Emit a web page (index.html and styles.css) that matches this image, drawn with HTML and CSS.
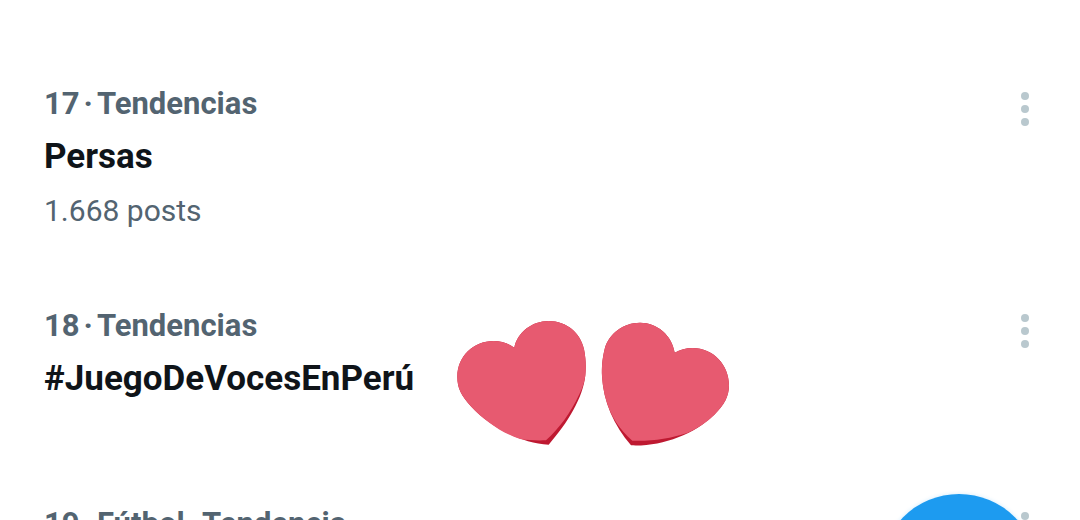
FILE: index.html
```html
<!DOCTYPE html>
<html lang="es">
<head>
  <meta charset="UTF-8">
  <title>Tendencias</title>
  <link rel="stylesheet" href="styles.css">
</head>
<body>
  <main class="trends">
    <article class="trend">
      <div class="trend-text">
        <p class="meta"><span>17</span> <span>·</span> <span>Tendencias</span></p>
        <h2 class="name">Persas</h2>
        <p class="posts">1.668 posts</p>
      </div>
      <button class="more" aria-label="Más opciones">
        <svg width="8" height="34" viewBox="0 0 8 34"><circle cx="4" cy="4" r="4"/><circle cx="4" cy="17" r="4"/><circle cx="4" cy="30" r="4"/></svg>
      </button>
    </article>

    <article class="trend">
      <div class="trend-text">
        <p class="meta"><span>18</span> <span>·</span> <span>Tendencias</span></p>
        <h2 class="name">#JuegoDeVocesEnPerú</h2>
      </div>
      <button class="more" aria-label="Más opciones">
        <svg width="8" height="34" viewBox="0 0 8 34"><circle cx="4" cy="4" r="4"/><circle cx="4" cy="17" r="4"/><circle cx="4" cy="30" r="4"/></svg>
      </button>
      <svg class="hearts" viewBox="0 0 930 465" aria-hidden="true">
        <path class="shade" d="M223 128C232 82 276 48 326 48C380 48 422 84 432 133C438 162 438 188 436 211C430 276 383 355 326 419C240 414 150 365 94 305C64 273 52 250 52 216C51 156 99 108 161 108C184 108 205 115 223 128Z"/>
        <path class="heart" d="M223 128C232 82 276 48 326 48C380 48 422 84 432 133C438 162 438 188 436 211C434 230 428 249 418 268C390 327 358 370 318 406C292 407 265 406 240 402C186 384 132 346 94 305C64 273 52 250 52 216C51 156 99 108 161 108C184 108 205 115 223 128Z"/>
        <path class="shade" d="M704 143C696 91 652 53 600 53C550 53 506 86 494 132C486 164 485 190 486 213C490 290 522 362 573 421C663 425 760 390 823 329C853 300 867 274 867 241C867 179 819 129 758 129C738 129 720 134 704 143Z"/>
        <path class="heart" d="M704 143C696 91 652 53 600 53C550 53 506 86 494 132C486 164 485 190 486 213C489 264 503 311 528 352C542 372 558 392 577 407C636 409 690 401 742 384C773 370 800 352 823 329C853 300 867 274 867 241C867 179 819 129 758 129C738 129 720 134 704 143Z"/>
      </svg>
    </article>

    <article class="trend">
      <div class="trend-text">
        <p class="meta"><span>19</span> <span>·</span> <span>Fútbol</span> <span>·</span> <span>Tendencia</span></p>
      </div>
      <button class="more" aria-label="Más opciones">
        <svg width="8" height="34" viewBox="0 0 8 34"><circle cx="4" cy="4" r="4"/><circle cx="4" cy="17" r="4"/><circle cx="4" cy="30" r="4"/></svg>
      </button>
    </article>
  </main>

  <button class="compose" aria-label="Publicar"></button>
</body>
</html>
```

FILE: styles.css
```css
body {
  margin: 0;
  height: 100vh;
  overflow: hidden;
  background: #fff;
  font-family: Roboto, "Liberation Sans", sans-serif;
}
.trends {
  display: flex;
  flex-direction: column;
  gap: 62px;
  padding: 77px 44px 0;
}
.trend {
  position: relative;
  display: flex;
  justify-content: space-between;
  align-items: flex-start;
  min-height: 136px;
}
.meta, .name, .posts {
  margin: 0;
  line-height: 53px;
  white-space: nowrap;
}
.meta {
  display: flex;
  gap: 4px;
  font-size: 31px;
  font-weight: 700;
  color: #536471;
}
.name {
  font-size: 35px;
  line-height: 54px;
  font-weight: 700;
  color: #0f1419;
}
.posts {
  font-size: 30px;
  color: #536471;
}
.more {
  display: flex;
  margin: 0;
  padding: 15px 7px;
  border: 0;
  background: none;
  cursor: pointer;
}
.more svg {
  fill: #b9c8ce;
}
/* sticker over the row */
.hearts {
  position: absolute;
  left: 396px;
  top: 6px;
  width: 310px;
}
.shade {
  fill: #be1931;
}
.heart {
  fill: #e75a70;
}
/* floating button */
.compose {
  position: absolute;
  right: 42px;
  bottom: -132px;
  width: 158px;
  height: 158px;
  padding: 0;
  border: 0;
  border-radius: 50%;
  background: #1d9bf0;
  box-shadow: 0 0 4px rgba(29, 155, 240, 0.2);
  cursor: pointer;
}
```
